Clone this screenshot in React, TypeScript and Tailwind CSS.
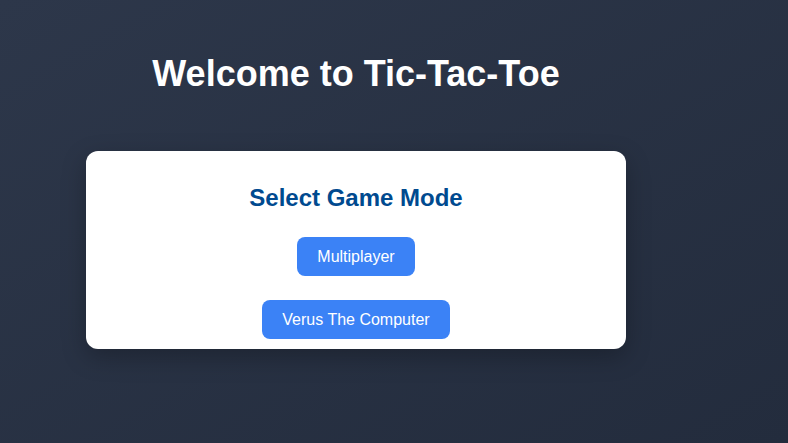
export default function App() {
  return (
    <div
      className="min-h-screen w-full bg-gradient-to-br from-[#2d374a] to-[#232c3d] pl-[86px] pt-[53px]"
      style={{ fontFamily: '"Liberation Sans", Arial, sans-serif' }}
    >
      <div className="flex w-[540px] flex-col items-center">
        <h1 className="text-[36px] font-bold leading-[41px] text-white">Welcome to Tic-Tac-Toe</h1>

        {/* mode picker card */}
        <div className="mt-[57px] flex h-[198px] w-full flex-col items-center rounded-xl bg-white pt-[33px] shadow-[0_8px_24px_rgba(0,0,0,0.25)]">
          <h2 className="text-[24px] font-bold leading-[28px] text-[#004a8f]">Select Game Mode</h2>
          <button className="mt-[25px] h-[39px] rounded-lg bg-[#3b82f6] px-5 text-[16px] text-white">
            Multiplayer
          </button>
          <button className="mt-[24px] h-[39px] rounded-lg bg-[#3b82f6] px-5 text-[16px] text-white">
            Verus The Computer
          </button>
        </div>
      </div>
    </div>
  );
}
